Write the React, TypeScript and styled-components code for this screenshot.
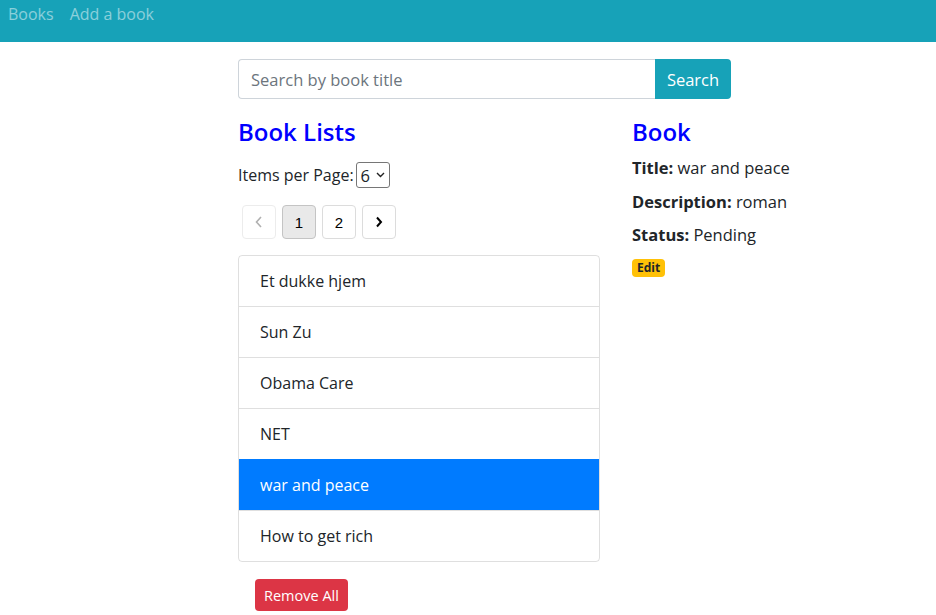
import React from "react";
import styled, { createGlobalStyle, css } from "styled-components";

const Global = createGlobalStyle`
  html, body { margin: 0; padding: 0; background: #fff; }
  body { font-family: "Open Sans", "Noto Sans", sans-serif; color: #212529; }
  * { box-sizing: border-box; }
`;

const Nav = styled.nav`
  height: 42px;
  background: #17a2b8;
  display: flex;
  align-items: flex-start;
  gap: 16px;
  padding: 3px 8px 0;
`;

const NavLink = styled.a`
  color: rgba(255, 255, 255, 0.5);
  font-size: 16px;
  line-height: 22px;
  text-decoration: none;
`;

const Main = styled.main`
  padding: 17px 0 0 238px;
`;

const SearchGroup = styled.div`
  display: flex;
  width: 493px;
  height: 40px;
`;

const SearchInput = styled.input`
  flex: 1;
  border: 1px solid #ced4da;
  border-right: none;
  border-radius: 4px 0 0 4px;
  padding: 0 12px;
  font: inherit;
  font-size: 16.5px;
  color: #495057;
  &::placeholder { color: #6c757d; }
`;

const SearchButton = styled.button`
  width: 76px;
  border: none;
  border-radius: 0 4px 4px 0;
  background: #17a2b8;
  color: #fff;
  font: inherit;
  font-size: 16.5px;
`;

const Columns = styled.div`
  display: flex;
  gap: 32px;
  margin-top: 18px;
`;

const LeftCol = styled.section`
  width: 362px;
  display: flex;
  flex-direction: column;
`;

const RightCol = styled.section`
  display: flex;
  flex-direction: column;
`;

const Heading = styled.h4`
  margin: 0;
  color: #0000ff;
  font-size: 24px;
  font-weight: 600;
  line-height: 30px;
`;

const PerPage = styled.div`
  margin-top: 15px;
  display: flex;
  align-items: center;
  gap: 2px;
  font-size: 16px;
`;

const Select = styled.div`
  width: 34px;
  height: 26px;
  border: 1px solid #767676;
  border-radius: 3px;
  display: flex;
  align-items: center;
  justify-content: space-between;
  padding: 0 4px 0 4px;
  font-size: 16.5px;
`;

const Pager = styled.div`
  display: flex;
  gap: 6px;
  margin: 17px 0 0 4px;
`;

const PageBtn = styled.div<{ $active?: boolean; $disabled?: boolean }>`
  width: 34px;
  height: 34px;
  border: 1px solid #dcdcdc;
  border-radius: 4px;
  display: flex;
  align-items: center;
  justify-content: center;
  font-family: "Liberation Sans", Arial, sans-serif;
  font-size: 15px;
  color: #000;
  background: #fff;
  ${(p) =>
    p.$active &&
    css`
      background: #e9e9e9;
      border-color: #c4c4c4;
    `}
  ${(p) =>
    p.$disabled &&
    css`
      border-color: #ececec;
      color: #b0b0b0;
    `}
`;

const List = styled.ul`
  list-style: none;
  margin: 16px 0 0;
  padding: 0;
  border: 1px solid rgba(0, 0, 0, 0.125);
  border-radius: 4px;
  overflow: hidden;
`;

const Item = styled.li<{ $active?: boolean }>`
  height: 51px;
  display: flex;
  align-items: center;
  padding: 0 21px;
  font-size: 16px;
  border-top: 1px solid rgba(0, 0, 0, 0.125);
  &:first-child { border-top: none; height: 50px; }
  ${(p) =>
    p.$active &&
    css`
      background: #007bff;
      color: #fff;
      border-top-color: #007bff;
    `}
`;

const RemoveBtn = styled.button`
  align-self: flex-start;
  margin: 17px 0 0 17px;
  height: 32px;
  padding: 0 9px;
  border: none;
  border-radius: 4px;
  background: #dc3545;
  color: #fff;
  font: inherit;
  font-size: 14.5px;
`;

const Field = styled.p`
  margin: 10px 0 0;
  font-size: 16.5px;
  line-height: 22px;
  & + & { margin-top: 11.5px; }
  b { font-weight: 700; }
`;

const Badge = styled.span`
  align-self: flex-start;
  margin-top: 13px;
  background: #ffc107;
  color: #212529;
  font-size: 12px;
  font-weight: 700;
  padding: 2px 5px;
  border-radius: 4px;
  line-height: 14px;
`;

const books = ["Et dukke hjem", "Sun Zu", "Obama Care", "NET", "war and peace", "How to get rich"];

export default function App() {
  return (
    <>
      <Global />
      <Nav>
        <NavLink>Books</NavLink>
        <NavLink>Add a book</NavLink>
      </Nav>
      <Main>
        <SearchGroup>
          <SearchInput placeholder="Search by book title" />
          <SearchButton>Search</SearchButton>
        </SearchGroup>
        <Columns>
          <LeftCol>
            <Heading>Book Lists</Heading>
            <PerPage>
              Items per Page:
              <Select>
                6
                <svg width="9" height="6" viewBox="0 0 9 6">
                  <path d="M1 1l3.5 3.5L8 1" fill="none" stroke="#222" strokeWidth="1.4" />
                </svg>
              </Select>
            </PerPage>
            <Pager>
              <PageBtn $disabled>
                <svg width="8" height="12" viewBox="0 0 8 12">
                  <path d="M6 1L1.5 6 6 11" fill="none" stroke="#b0b0b0" strokeWidth="1.6" />
                </svg>
              </PageBtn>
              <PageBtn $active>1</PageBtn>
              <PageBtn>2</PageBtn>
              <PageBtn>
                <svg width="8" height="12" viewBox="0 0 8 12">
                  <path d="M2 1.5L6 6 2 10.5" fill="none" stroke="#000" strokeWidth="2" />
                </svg>
              </PageBtn>
            </Pager>
            <List>
              {books.map((b) => (
                <Item key={b} $active={b === "war and peace"}>
                  {b}
                </Item>
              ))}
            </List>
            <RemoveBtn>Remove All</RemoveBtn>
          </LeftCol>
          <RightCol>
            <Heading>Book</Heading>
            <Field>
              <b>Title:</b> war and peace
            </Field>
            <Field>
              <b>Description:</b> roman
            </Field>
            <Field>
              <b>Status:</b> Pending
            </Field>
            <Badge>Edit</Badge>
          </RightCol>
        </Columns>
      </Main>
    </>
  );
}
